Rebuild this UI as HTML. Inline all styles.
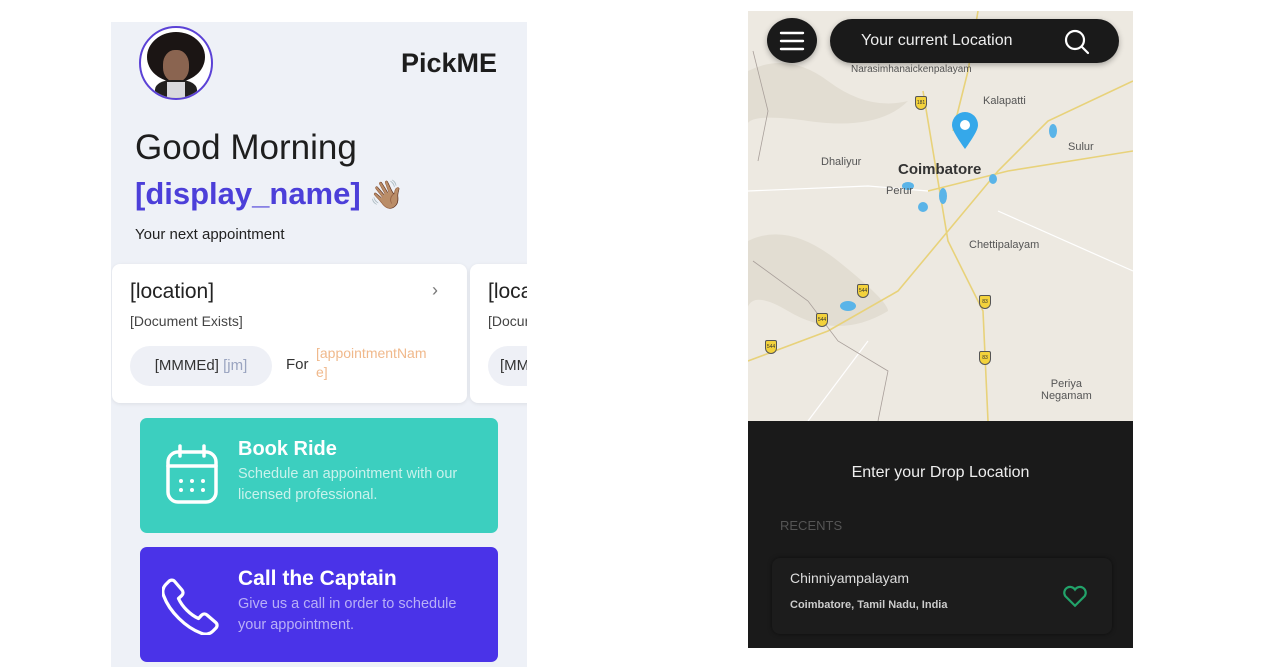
<!DOCTYPE html>
<html><head><meta charset="utf-8"><style>
*{margin:0;padding:0;box-sizing:border-box}
body{width:1280px;height:667px;background:#fff;position:relative;overflow:hidden;font-family:"Liberation Sans",sans-serif}
.a{position:absolute}
.l{left:111px;top:22px;width:416px;height:645px;background:#eef1f7;overflow:hidden}
.card{background:#fff;border-radius:8px;box-shadow:0 1px 4px rgba(0,0,0,.08)}
.pill{background:#eef0f6;border-radius:20px}
.map{left:748px;top:11px;width:385px;height:410px;background:#ede9e1;overflow:hidden}
.lbl{position:absolute;font-size:11px;color:#555}
.sh{position:absolute;width:12px;height:14px;background:#f3d23c;border:1px solid #555;border-radius:2px 2px 6px 6px;font-size:5px;text-align:center;line-height:12px;color:#333}
</style></head><body>
<div class="a l">
  <div class="a" style="left:28px;top:4px;width:74px;height:74px;border-radius:50%;border:2px solid #5b42d6;background:#fff;overflow:hidden">
    <div class="a" style="left:6px;top:4px;width:58px;height:50px;border-radius:50%;background:#1b1514"></div>
    <div class="a" style="left:22px;top:22px;width:26px;height:32px;border-radius:45%;background:#8a6450"></div>
    <div class="a" style="left:14px;top:52px;width:42px;height:24px;border-radius:40% 40% 0 0;background:#22201f"></div>
    <div class="a" style="left:26px;top:54px;width:18px;height:20px;background:#d9d9dd"></div>
  </div>
  <div class="a" style="left:290px;top:26px;font-size:27px;font-weight:bold;color:#1d1d1d">PickME</div>
  <div class="a" style="left:24px;top:106px;font-size:35px;color:#1e1e1e">Good Morning</div>
  <div class="a" style="left:24px;top:154px;font-size:31px;font-weight:bold;color:#4c3fd9">[display_name] <span style="font-size:28px">👋🏽</span></div>
  <div class="a" style="left:24px;top:204px;font-size:15px;color:#222">Your next appointment</div>
  <div class="a card" style="left:1px;top:242px;width:355px;height:139px">
    <div class="a" style="left:18px;top:16px;font-size:21px;color:#222">[location]</div>
    <div class="a" style="left:320px;top:16px;font-size:18px;color:#777">›</div>
    <div class="a" style="left:18px;top:49px;font-size:14px;color:#444">[Document Exists]</div>
    <div class="a pill" style="left:18px;top:82px;width:142px;height:40px;font-size:15px;color:#333;line-height:40px;text-align:center">[MMMEd] <span style="color:#9aa4c0">[jm]</span></div>
    <div class="a" style="left:174px;top:92px;font-size:15px;color:#333">For</div>
    <div class="a" style="left:204px;top:80px;width:140px;font-size:14px;color:#f0b98c;line-height:19px">[appointmentNam<br>e]</div>
  </div>
  <div class="a card" style="left:359px;top:242px;width:80px;height:139px">
    <div class="a" style="left:18px;top:16px;font-size:21px;color:#222;white-space:nowrap">[location]</div>
    <div class="a" style="left:18px;top:49px;font-size:14px;color:#444;white-space:nowrap">[Document</div>
    <div class="a pill" style="left:18px;top:82px;width:142px;height:40px;font-size:15px;color:#333;line-height:40px;padding-left:12px">[MMMEd]</div>
  </div>
  <div class="a" style="left:29px;top:396px;width:358px;height:115px;background:#3ccfbf;border-radius:7px">
    <svg class="a" style="left:24px;top:26px" width="56" height="62" viewBox="0 0 56 62" fill="none" stroke="#fff" stroke-width="3.5" stroke-linecap="round"><rect x="4" y="8" width="48" height="50" rx="10"/><path d="M4 22H52M16 2V12M40 2V12"/><g fill="#fff" stroke="none"><circle cx="17" cy="37" r="2"/><circle cx="28" cy="37" r="2"/><circle cx="39" cy="37" r="2"/><circle cx="17" cy="46" r="2"/><circle cx="28" cy="46" r="2"/><circle cx="39" cy="46" r="2"/></g></svg>
    <div class="a" style="left:98px;top:20px;font-size:20px;font-weight:bold;color:#fff">Book Ride</div>
    <div class="a" style="left:98px;top:46px;width:245px;font-size:14.5px;line-height:21px;color:#c9f2ec">Schedule an appointment with our licensed professional.</div>
  </div>
  <div class="a" style="left:29px;top:525px;width:358px;height:115px;background:#4a33e8;border-radius:7px">
    <svg class="a" style="left:22px;top:28px" width="60" height="60" viewBox="0 0 24 24" fill="none" stroke="#fff" stroke-width="1.3" stroke-linejoin="round"><path d="M5 2.5 8 6c.6.7.5 1.6-.1 2.2L6.6 9.4c1.4 3.2 4.8 6.6 8 8l1.2-1.3c.6-.6 1.5-.7 2.2-.1l3.5 3c.7.6.7 1.6 0 2.3l-1.2 1.2c-1.2 1.2-3 1.5-4.6.8C9.4 21 3 14.6.7 8.4 0 6.8.3 5 1.5 3.8L2.7 2.6c.7-.7 1.7-.7 2.3-.1z"/></svg>
    <div class="a" style="left:98px;top:20px;font-size:21px;font-weight:bold;color:#fff">Call the Captain</div>
    <div class="a" style="left:98px;top:47px;width:245px;font-size:14.5px;line-height:21px;color:#b9b0f7">Give us a call in order to schedule your appointment.</div>
  </div>
</div>

<div class="a map">
  <svg class="a" style="left:0;top:0" width="385" height="410" fill="none">
    <path d="M0 60 Q40 40 80 70 T160 90 Q130 120 60 110 T0 120Z" fill="#e2ddd2"/>
    <path d="M0 230 Q40 210 90 250 T140 300 Q90 330 40 300 T0 320Z" fill="#e2ddd2"/>
    <g stroke="#e8d27a" stroke-width="1.6"><path d="M175 80 L185 140 L200 230 L235 300 L240 410"/><path d="M385 70 L300 110 L250 160 L200 220 L150 280 L80 320 L0 350"/><path d="M180 180 L260 160 L385 140"/><path d="M230 0 L220 60 L205 120"/></g>
    <g stroke="#fff" stroke-width="1.2"><path d="M0 180 L120 175 L180 180"/><path d="M250 200 L385 260"/><path d="M60 410 L120 330"/></g>
    <path d="M5 40 L20 100 L10 150 M5 250 L60 290 L90 330 L140 360 L130 410" stroke="#a89f9a" stroke-width=".8"/>
    <g fill="#5ab4e8"><ellipse cx="160" cy="175" rx="6" ry="4"/><ellipse cx="195" cy="185" rx="4" ry="8"/><ellipse cx="175" cy="196" rx="5" ry="5"/><ellipse cx="245" cy="168" rx="4" ry="5"/><ellipse cx="305" cy="120" rx="4" ry="7"/><ellipse cx="100" cy="295" rx="8" ry="5"/></g>
  </svg>
  <div class="lbl" style="left:103px;top:53px;font-size:10px">Narasimhanaickenpalayam</div>
  <div class="lbl" style="left:235px;top:84px">Kalapatti</div>
  <div class="lbl" style="left:320px;top:130px">Sulur</div>
  <div class="lbl" style="left:73px;top:145px">Dhaliyur</div>
  <div class="lbl" style="left:150px;top:150px;font-size:15px;font-weight:bold;color:#333">Coimbatore</div>
  <div class="lbl" style="left:138px;top:174px">Perur</div>
  <div class="lbl" style="left:221px;top:228px">Chettipalayam</div>
  <div class="lbl" style="left:293px;top:367px;text-align:center">Periya<br>Negamam</div>
  <div class="sh" style="left:167px;top:85px">181</div>
  <div class="sh" style="left:109px;top:273px">544</div>
  <div class="sh" style="left:68px;top:302px">544</div>
  <div class="sh" style="left:17px;top:329px">544</div>
  <div class="sh" style="left:231px;top:284px">83</div>
  <div class="sh" style="left:231px;top:340px">83</div>
  <svg class="a" style="left:202px;top:100px" width="30" height="40" viewBox="0 0 30 40"><path d="M15 38C5 24 2 18 2 14a13 13 0 0 1 26 0c0 4-3 10-13 24z" fill="#35a8ea"/><circle cx="15" cy="14" r="5" fill="#fff"/></svg>
  <div class="a" style="left:19px;top:7px;width:50px;height:45px;border-radius:50%;background:#1a1a1a;box-shadow:0 2px 6px rgba(0,0,0,.3)"></div>
  <svg class="a" style="left:31px;top:19px" width="26" height="22"><path d="M2 3H24M2 11H24M2 19H24" stroke="#fff" stroke-width="2.4" stroke-linecap="round"/></svg>
  <div class="a" style="left:82px;top:8px;width:289px;height:44px;border-radius:22px;background:#1a1a1a;box-shadow:0 2px 6px rgba(0,0,0,.3)">
    <div class="a" style="left:31px;top:13px;font-size:16px;color:#eee">Your current Location</div>
    <svg class="a" style="left:233px;top:9px" width="28" height="28" fill="none" stroke="#fff" stroke-width="2.2"><circle cx="12" cy="12" r="9"/><path d="M19 19l6 6" stroke-linecap="round"/></svg>
  </div>
</div>
<div class="a" style="left:748px;top:421px;width:385px;height:227px;background:#1a1a1a">
  <div class="a" style="left:0;top:43px;width:385px;text-align:center;font-size:16px;color:#eee">Enter your Drop Location</div>
  <div class="a" style="left:32px;top:97px;font-size:13px;color:#555">RECENTS</div>
  <div class="a" style="left:24px;top:137px;width:340px;height:76px;border-radius:8px;background:#1c1c1c;box-shadow:0 0 4px rgba(0,0,0,.5)">
    <div class="a" style="left:18px;top:12px;font-size:14px;color:#ddd">Chinniyampalayam</div>
    <div class="a" style="left:18px;top:41px;font-size:11px;color:#ccc;font-weight:bold">Coimbatore, Tamil Nadu, India</div>
    <svg class="a" style="left:290px;top:26px" width="26" height="24" viewBox="0 0 24 22" fill="none" stroke="#22a36a" stroke-width="2"><path d="M12 20 3 11a5 5 0 0 1 9-6 5 5 0 0 1 9 6z"/></svg>
  </div>
</div>
</body></html>
